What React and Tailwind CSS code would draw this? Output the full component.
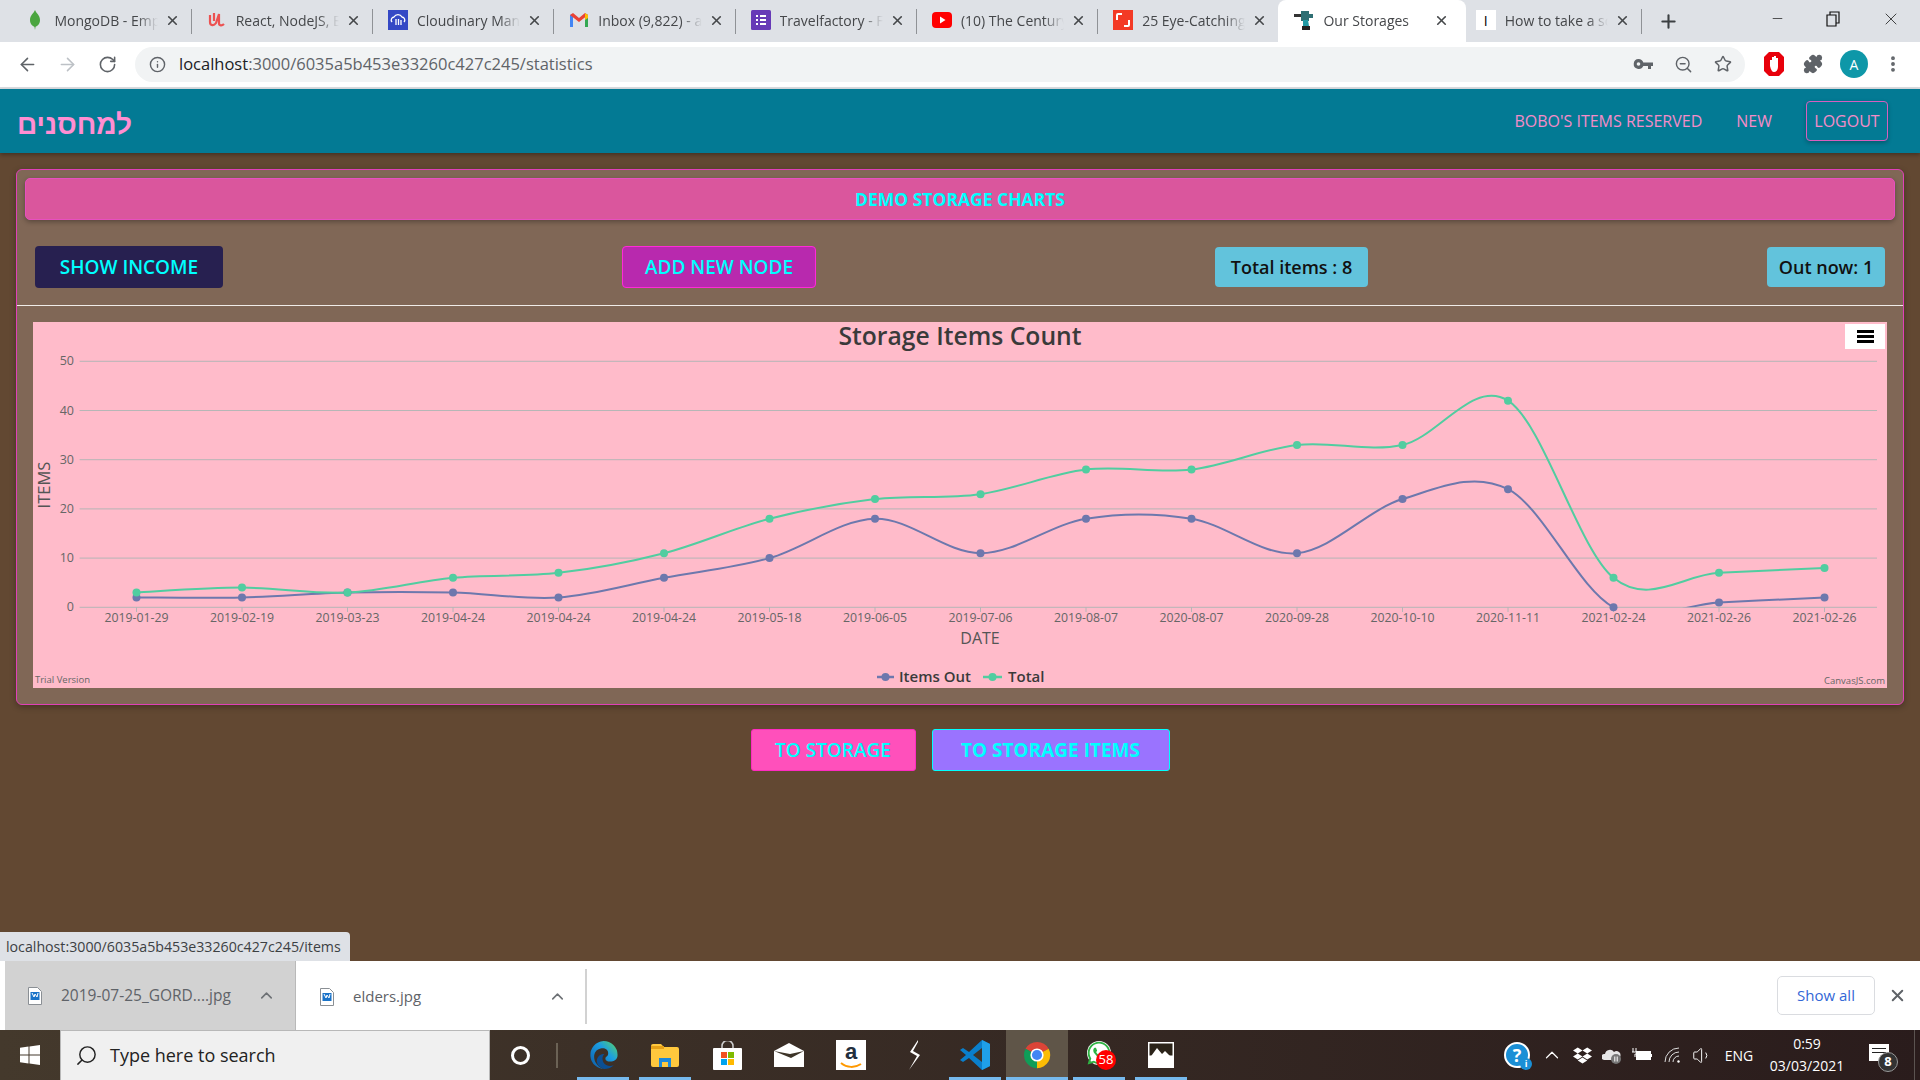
import React from "react";
import { ArrowLeft, ArrowRight, RotateCw, Info, ZoomOut, Star, Puzzle, EllipsisVertical, Search, Minus, X, Plus, ChevronUp, Volume1 } from "lucide-react";
import { FaDropbox, FaWhatsapp } from "react-icons/fa";

// Chart data
const labels = ["2019-01-29","2019-02-19","2019-03-23","2019-04-24","2019-04-24","2019-04-24","2019-05-18","2019-06-05","2019-07-06","2019-08-07","2020-08-07","2020-09-28","2020-10-10","2020-11-11","2021-02-24","2021-02-26","2021-02-26"];
const itemsOut = [2,2,3,3,2,6,10,18,11,18,18,11,22,24,0,1,2];
const itemsTotal = [3,4,3,6,7,11,18,22,23,28,28,33,33,42,6,7,8];

const xAt = (i) => 103.5 + i * 105.5;
const yAt = (v) => 285.3 - v * 4.92;

const splinePath = (values) => {
  const pts = values.map((v, i) => [xAt(i), yAt(v)]);
  let d = `M${pts[0][0]} ${pts[0][1]}`;
  for (let i = 0; i < pts.length - 1; i++) {
    const p0 = pts[i - 1] || pts[i];
    const p1 = pts[i];
    const p2 = pts[i + 1];
    const p3 = pts[i + 2] || p2;
    const c1x = p1[0] + (p2[0] - p0[0]) / 6;
    const c1y = p1[1] + (p2[1] - p0[1]) / 6;
    const c2x = p2[0] - (p3[0] - p1[0]) / 6;
    const c2y = p2[1] - (p3[1] - p1[1]) / 6;
    d += ` C${c1x} ${c1y} ${c2x} ${c2y} ${p2[0]} ${p2[1]}`;
  }
  return d;
};

const Fav = ({ children }) => (
  <svg width="20" height="20" viewBox="0 0 20 20" className="relative shrink-0">{children}</svg>
);

const tabs = [
  { title: "MongoDB - Empowering", icon: <Fav><path d="M10 0c1 3 5 5 5 10s-3.500 6-4.500 7l-.5 3-.5-3C8.500 16 5 15 5 10s4-7 5-10z" fill="#4aa53f" /></Fav> },
  { title: "React, NodeJS, Express", icon: <Fav><path d="M3 5v7c0 4 4 4 6 1l3-9v9c0 3 3 3 5 1M7 3v8" fill="none" stroke="#ec5252" strokeWidth="2.200" /></Fav> },
  { title: "Cloudinary Management", icon: <Fav><rect width="20" height="20" fill="#3448c5" /><path d="M4 12a3 3 0 0 1 2-5 4.500 4.500 0 0 1 8 0 3 3 0 0 1 2 5" fill="none" stroke="#fff" strokeWidth="1.300" /><path d="M8 9v6M10.500 9v6M13 10v5" stroke="#fff" strokeWidth="1.300" /></Fav> },
  { title: "Inbox (9,822) - avi", icon: <Fav><path d="M1 17V5l3-1v13z" fill="#4285f4" /><path d="M19 17V5l-3-1v13z" fill="#34a853" /><path d="M1 5l3-2 6 5 6-5 3 2-9 7z" fill="#ea4335" /><path d="M16 3l3 2v3l-3 2z" fill="#fbbc04" /></Fav> },
  { title: "Travelfactory - Forms", icon: <Fav><rect width="20" height="20" rx="1.500" fill="#673ab7" /><path d="M5 5h2v2H5zM5 9h2v2H5zM5 13h2v2H5zM9 5h6v2H9zM9 9h6v2H9zM9 13h6v2H9z" fill="#fff" /></Fav> },
  { title: "(10) The Century of", icon: <Fav><rect y="2" width="20" height="16" rx="4" fill="#ff0000" /><path d="M8 6.500l5.500 3.500L8 13.500z" fill="#fff" /></Fav> },
  { title: "25 Eye-Catching Charts", noSep: true, icon: <Fav><rect width="20" height="20" fill="#f33a25" /><path d="M4 10V5a1 1 0 0 1 1-1h4M16 10v5a1 1 0 0 1-1 1h-4" fill="none" stroke="#fff" strokeWidth="2" /></Fav> },
  { title: "Our Storages", active: true, noSep: true, icon: <Fav><path d="M0 4h8v3H0z" fill="#333" /><path d="M7 1h8v3h4v4h-4v3H7z" fill="#2f6f73" /><path d="M9 10h5l1 6H9z" fill="#1f9aa5" /><path d="M8 16h8v4H8z" fill="#222" /></Fav> },
  { title: "How to take a screen", icon: <span className="w-5 h-5 shrink-0 bg-white flex items-center justify-center text-[14px] text-black">I</span> },
];

const Tab = ({ tab }) => (
  <div className="relative flex items-center shrink-0 w-[181.300px] h-[42px] pl-[15px] pr-[12px] pb-[2px]">
    {tab.active && <div className="absolute inset-y-0 -left-[1px] -right-[5px] bg-white rounded-t-[8px]" />}
    {tab.icon}
    <span className="relative ml-[9px] flex-1 overflow-hidden whitespace-nowrap text-[14px] text-[#45474a] [mask-image:linear-gradient(to_right,black_80%,transparent)]">{tab.title}</span>
    <X size={15} strokeWidth={2.600} className="relative ml-[7px] shrink-0 text-[#45474a]" />
    {!tab.noSep && <div className="absolute right-0 top-[9px] h-[25px] w-px bg-[#8f9296]" />}
  </div>
);

const TabStrip = () => (
  <div className="flex items-center h-[42px] shrink-0 bg-[#dee1e6] pl-[10.400px]">
    {tabs.map((tab) => <Tab key={tab.title} tab={tab} />)}
    <Plus size={21} strokeWidth={2.400} className="ml-[16px] text-[#3c4043]" />
    <div className="ml-auto flex items-center -mt-[5px] text-[#222]">
      <Minus size={15} strokeWidth={1.200} className="mr-[41px]" />
      <svg width="14" height="16" viewBox="0 0 14 16" className="mr-[41px]" fill="none" stroke="#111" strokeWidth="1.200"><path d="M1 4h9v11H1zM4 4V1h9v11h-3" /></svg>
      <X size={20} strokeWidth={1} className="mr-[19px]" />
    </div>
  </div>
);

const Toolbar = () => (
  <div className="flex items-center h-[47px] shrink-0 bg-white border-b-2 border-[#dadce0] pb-[1px]">
    <ArrowLeft size={21} strokeWidth={1.800} className="ml-[17px] text-[#5f6368]" />
    <ArrowRight size={21} strokeWidth={1.800} className="ml-[19px] text-[#bdc1c6]" />
    <RotateCw size={19} strokeWidth={2} className="ml-[20px] text-[#5f6368]" />
    <div className="flex items-center ml-[18px] w-[1610px] h-[35px] rounded-full bg-[#f1f3f4] pl-[14px] pr-[13px]">
      <Info size={17} strokeWidth={2} className="text-[#5f6368]" />
      <span className="ml-[13px] text-[16.500px] text-[#202124]">localhost<span className="text-[#5f6368]">:3000/6035a5b453e33260c427c245/statistics</span></span>
      <svg width="20" height="12" viewBox="0 0 20 12" className="ml-auto"><path d="M5.500 1a5 5 0 0 1 4.800 3.500H20V8h-2v3h-3V8h-4.700A5 5 0 1 1 5.500 1z" fill="#5f6368" /><circle cx="5.500" cy="6" r="1.800" fill="#f1f3f4" /></svg>
      <ZoomOut size={19} strokeWidth={1.800} className="ml-[21px] text-[#5f6368]" />
      <Star size={18} strokeWidth={2} className="ml-[21px] text-[#5f6368]" />
    </div>
    <svg width="22" height="26" viewBox="0 0 22 26" className="ml-[18px]"><path d="M6 1h10l5 5v14l-5 5H6l-5-5V6z" fill="#e8000b" /><path d="M7 15V9l2 0v4-7h2v6-7h2v7-5h2v9c0 3-2 5-4 5s-3-2-4-6z" fill="#fff" /></svg>
    <Puzzle size={20} fill="#5f6368" className="ml-[18px] text-[#5f6368]" />
    <div className="ml-[17px] flex items-center justify-center w-[28px] h-[28px] rounded-full bg-[#0e97a8] text-white text-[14px]">A</div>
    <EllipsisVertical size={20} strokeWidth={2.600} className="ml-[15px] text-[#5f6368]" />
  </div>
);

const Navbar = () => (
  <nav className="relative z-10 flex items-center h-[64px] shrink-0 bg-[#037a94] pl-[17px] pr-[32px] shadow-[0_2px_4px_rgba(0,0,0,0.3)]">
    <span className="mt-[7px] text-[28px] font-bold text-[#ff8ed2] font-['Liberation_Sans',sans-serif]" dir="rtl">למחסנים</span>
    <div className="ml-auto flex items-center text-[16px] text-[#f48cc8]">
      <a>BOBO'S ITEMS RESERVED</a>
      <a className="ml-[34px]">NEW</a>
      <a className="ml-[34px] flex items-center justify-center w-[82px] h-[40px] border border-[#d75fc0] rounded-[4px] shadow-[0_2px_4px_rgba(0,0,0,0.25)]">LOGOUT</a>
    </div>
  </nav>
);

const Chart = () => (
  <div className="relative mx-[16px] h-[366px] bg-[#ffbbca]">
    <svg width="1854" height="366" viewBox="0 0 1854 366" className="block" fontFamily="'Open Sans', sans-serif">
      <defs>
        <clipPath id="plot"><rect x="46" y="30" width="1798" height="255.300" /></clipPath>
      </defs>
      <text x="927" y="23" textAnchor="middle" fontSize="24.700" fontWeight="600" fill="#3a3a3a">Storage Items Count</text>
      {[0, 10, 20, 30, 40, 50].map((v) => (
        <g key={v}>
          <line x1="46.600" x2="1844" y1={yAt(v)} y2={yAt(v)} stroke="#b6b6b6" strokeWidth="1" />
          <text x="41" y={yAt(v) + 4} textAnchor="end" fontSize="12.500" fill="#666">{v}</text>
        </g>
      ))}
      {labels.map((l, i) => (
        <g key={i}>
          <line x1={xAt(i)} x2={xAt(i)} y1="285" y2="290" stroke="#b6b6b6" />
          <text x={xAt(i)} y="300" textAnchor="middle" fontSize="12.300" fill="#666">{l}</text>
        </g>
      ))}
      <text x="0" y="0" transform="translate(17 163) rotate(-90)" textAnchor="middle" fontSize="16.500" fill="#555">ITEMS</text>
      <text x="947" y="322" textAnchor="middle" fontSize="16" fill="#555">DATE</text>
      <g clipPath="url(#plot)">
        <path d={splinePath(itemsOut)} fill="none" stroke="#6d78ad" strokeWidth="2" />
        <path d={splinePath(itemsTotal)} fill="none" stroke="#51cda0" strokeWidth="2" />
      </g>
      {itemsOut.map((v, i) => <circle key={i} cx={xAt(i)} cy={yAt(v)} r="4" fill="#6d78ad" />)}
      {itemsTotal.map((v, i) => <circle key={i} cx={xAt(i)} cy={yAt(v)} r="4" fill="#51cda0" />)}
      <line x1="844" x2="861" y1="355" y2="355" stroke="#6d78ad" strokeWidth="2.500" />
      <circle cx="852.500" cy="355" r="4" fill="#6d78ad" />
      <text x="866" y="360" fontSize="15" fontWeight="600" fill="#3a3a3a">Items Out</text>
      <line x1="950" x2="969" y1="355" y2="355" stroke="#51cda0" strokeWidth="2.500" />
      <circle cx="959.500" cy="355" r="4" fill="#51cda0" />
      <text x="975" y="360" fontSize="15" fontWeight="600" fill="#3a3a3a">Total</text>
      <text x="2" y="361" fontSize="9.500" fill="#666">Trial Version</text>
      <text x="1852" y="362" textAnchor="end" fontSize="9.500" fill="#666">CanvasJS.com</text>
    </svg>
    <div className="absolute right-[2px] top-[2px] flex flex-col justify-center gap-[2px] items-center w-[40px] h-[25px] bg-white">
      <div className="w-[17px] h-[3px] bg-black" />
      <div className="w-[17px] h-[3px] bg-black" />
      <div className="w-[17px] h-[3px] bg-black" />
    </div>
  </div>
);

const Card = () => (
  <div className="border border-[#e040b8] rounded-[6px] bg-[#806756] pt-[8px] pb-[16px] shadow-[0_2px_6px_rgba(0,0,0,0.3)]">
    <div className="mx-[8px] flex items-center justify-center h-[42px] pt-[1px] rounded-[5px] border border-[#e84fc0] bg-[#da569d] text-[17.500px] font-bold text-[#00ffff] shadow-[0_2px_5px_rgba(0,0,0,0.3)]">
      DEMO STORAGE CHARTS
    </div>
    <div className="flex items-center justify-between h-[86px] px-[18px] pt-[9px] border-b border-[#f0ece8]">
      <button className="w-[188px] h-[42px] rounded-[4px] bg-[#272050] text-[19px] font-semibold text-[#00ffff]">SHOW INCOME</button>
      <button className="w-[194px] h-[42px] rounded-[4px] border border-[#ff2ad8] bg-[#b829ae] text-[19px] font-semibold text-[#00ffff]">ADD NEW NODE</button>
      <div className="flex items-center justify-center w-[153px] h-[40px] rounded-[4px] bg-[#62c3dc] text-[18px] font-semibold text-[#111]">Total items : 8</div>
      <div className="flex items-center justify-center w-[118px] h-[40px] rounded-[4px] bg-[#62c3dc] text-[18px] font-semibold text-[#111]">Out now: 1</div>
    </div>
    <div className="mt-[16px]"><Chart /></div>
  </div>
);

const FileIcon = () => (
  <svg width="14" height="18" viewBox="0 0 14 18" className="shrink-0"><path d="M.5.5h9l4 4v13H.5z" fill="#fff" stroke="#8a8f94" /><rect x="2.500" y="5" width="9" height="8" fill="#1a73c8" /><path d="M4 6l2 4 1-3 2 3 1-4" stroke="#fff" fill="none" /></svg>
);

const DownloadBar = () => (
  <div className="flex items-stretch h-[69px] shrink-0 bg-white pl-[5px]">
    <div className="flex items-center w-[291px] bg-[#d2d2d2] pl-[23px] border-r border-[#b9b9b9]">
      <FileIcon />
      <span className="ml-[19px] text-[15.500px] text-[#5f6368]">2019-07-25_GORD....jpg</span>
      <ChevronUp size={19} className="ml-auto mr-[19px] text-[#6d7175]" />
    </div>
    <div className="flex items-center w-[291px] pl-[24px] my-[8px] mb-[6px] border-r-2 border-[#d2d2d2]">
      <FileIcon />
      <span className="ml-[19px] text-[15px] text-[#5f6368]">elders.jpg</span>
      <ChevronUp size={19} className="ml-auto mr-[18px] text-[#6d7175]" />
    </div>
    <button className="ml-auto self-center w-[98px] h-[39px] rounded-[5px] border border-[#dadce0] text-[15px] text-[#3367d6]">Show all</button>
    <X size={19} strokeWidth={2.500} className="self-center ml-[13px] mr-[13px] text-[#5f6368]" />
  </div>
);

const Chrome = () => (
  <svg width="28" height="28" viewBox="0 0 36 36"><path d="M18 18 3.300 10A17 17 0 0 1 33 10z" fill="#db4437" /><path d="M18 18 33 10A17 17 0 0 1 18 35z" fill="#fbbc05" /><path d="M18 18 18 35A17 17 0 0 1 3.300 10z" fill="#0f9d58" /><circle cx="18" cy="18" r="8.500" fill="#fff" /><circle cx="18" cy="18" r="6.500" fill="#4285f4" /></svg>
);

const apps = [
  { key: "edge", bar: true, icon: <svg width="31" height="30" viewBox="0 0 32 32"><defs><linearGradient id="edge" x1="0" y1="1" x2="1" y2="0"><stop offset="0" stopColor="#0c59a4" /><stop offset="0.6" stopColor="#1b9de2" /><stop offset="1" stopColor="#5dd85f" /></linearGradient></defs><path d="M16 1a15 15 0 0 1 15 15c0 5-4 7-8 7-3 0-5-1-5-3 0-3 3-2 3-6 0-4-4-6-8-5C8 10 6 14 6 18c0 6 5 12 12 13A15 15 0 0 1 16 1z" fill="url(#edge)" /><path d="M9 24c-1-6 4-10 8-9-2 2-3 5-1 9 2 3 6 5 11 3-3 3-7 4-10 4-3-1-7-3-8-7z" fill="#0b4f94" /></svg> },
  { key: "files", bar: true, icon: <svg width="28" height="23" viewBox="0 0 28 23"><path d="M0 2a2 2 0 0 1 2-2h8l3 3h13a2 2 0 0 1 2 2v16a2 2 0 0 1-2 2H2a2 2 0 0 1-2-2z" fill="#ffc83d" /><path d="M0 2h13v3H0z" fill="#e6a118" /><path d="M8 23v-9h12v9h-3v-5h-6v5z" fill="#1e88d8" /></svg> },
  { key: "store", icon: <svg width="29" height="29" viewBox="0 0 29 29"><path d="M9 7V5a5.500 5.500 0 0 1 11 0v2" fill="none" stroke="#cfcfcf" strokeWidth="1.500" /><rect y="7" width="29" height="22" rx="1" fill="#fff" /><rect x="8" y="11" width="6" height="6" fill="#f25022" /><rect x="15" y="11" width="6" height="6" fill="#7fba00" /><rect x="8" y="18" width="6" height="6" fill="#00a4ef" /><rect x="15" y="18" width="6" height="6" fill="#ffb900" /></svg> },
  { key: "mail", icon: <svg width="30" height="24" viewBox="0 0 30 24"><path d="M0 8 15 0l15 8v16H0z" fill="#fff" /><path d="M0 8l17 7 13-7-14 3z" fill="#3d3428" /></svg> },
  { key: "amazon", icon: <div className="relative flex justify-center w-[30px] h-[30px] bg-white"><span className="text-[22px] leading-[24px] font-bold text-[#232f3e] font-['Liberation_Sans',sans-serif]">a</span><svg width="22" height="7" viewBox="0 0 22 7" className="absolute bottom-[1px]"><path d="M1 1c6 5 14 5 20 1" fill="none" stroke="#f90" strokeWidth="2" /></svg></div> },
  { key: "sword", icon: <svg width="13" height="30" viewBox="0 0 13 30"><path d="M11 0 3 12l7 4-8 14 11-15-7-4 5-9z" fill="#fff" /></svg> },
  { key: "code", bar: true, icon: <svg width="30" height="30" viewBox="0 0 30 30"><path d="M22 0 30 4v22l-8 4L9 18l-6 4-3-2 6-5-6-5 3-2 6 4z" fill="#0a7fcb" /><path d="M22 8 13 15l9 7z" fill="#3d3428" /><path d="M22 0l8 4v22l-8 4z" fill="#1fa0e8" /></svg> },
  { key: "chrome", bar: true, active: true, icon: <Chrome /> },
  { key: "whatsapp", bar: true, icon: <div className="relative w-[26px] h-[30px]"><div className="absolute left-[1px] top-[1px] w-[24px] h-[24px] rounded-full bg-white" /><FaWhatsapp size={26} className="absolute left-0 top-0 text-[#2fb344]" /><div className="absolute left-[10px] top-[10px] flex items-center justify-center w-[20px] h-[20px] rounded-full bg-[#f00] text-[13px] text-white">58</div></div> },
  { key: "photos", bar: true, icon: <svg width="26" height="26" viewBox="0 0 26 26"><rect width="26" height="26" fill="#fff" /><rect x="1.500" y="1.500" width="23" height="12" fill="#2b2319" /><path d="M1 17 9 6l5 6 3-3 8 8v9H1z" fill="#fff" /></svg> },
];

const TaskbarApp = ({ app }) => (
  <div className={`relative flex items-center justify-center w-[62px] h-[50px] ${app.active ? "bg-[#5f5548]" : ""}`}>
    {app.icon}
    {app.bar && <div className={`absolute bottom-0 h-[3px] bg-[#76b9ed] ${app.active ? "inset-x-0" : "left-[5px] right-[5px]"}`} />}
  </div>
);

const Tray = () => (
  <div className="flex items-center h-full w-[423px] text-white">
    <div className="flex items-center justify-center w-[40px]">
      <div className="relative flex items-center justify-center w-[26px] h-[26px] rounded-full bg-[#1a8fd6] border-2 border-white text-[18px] font-bold">?
        <div className="absolute -right-[4px] -bottom-[4px] flex items-center justify-center w-[12px] h-[12px] rounded-full bg-[#1a8fd6] text-[9px]">i</div>
      </div>
    </div>
    <div className="flex justify-center w-[30px]"><ChevronUp size={22} strokeWidth={1.300} /></div>
    <div className="flex justify-center w-[30px]"><FaDropbox size={19} /></div>
    <div className="flex justify-center w-[30px]">
      <svg width="20" height="17" viewBox="0 0 20 17"><path d="M2 13a3 3 0 0 1 1-6 5 5 0 0 1 9-2 4 4 0 0 1 6 5v3z" fill="#e6e6e6" /><circle cx="14" cy="12" r="5" fill="#777" /><path d="M12.800 9.500v5M15.200 9.500v5" stroke="#fff" /></svg>
    </div>
    <div className="flex justify-center w-[30px]">
      <svg width="20" height="14" viewBox="0 0 20 14"><path d="M1 0v4M4 0v4M0 4h5v2H3v3" stroke="#fff" fill="none" /><rect x="4.500" y="3.500" width="14" height="8" fill="#fff" stroke="#fff" /><rect x="19" y="6" width="1" height="3" fill="#fff" /></svg>
    </div>
    <div className="flex justify-center w-[30px]">
      <svg width="16" height="16" viewBox="0 0 16 16" fill="none" stroke="#ddd" strokeWidth="1"><path d="M1 15A14 14 0 0 1 15 1M5 15A10 10 0 0 1 15 5M9 15a6 6 0 0 1 6-6" /><circle cx="14.500" cy="14.500" r="1.200" fill="#fff" stroke="none" /></svg>
    </div>
    <div className="flex justify-center w-[30px]"><Volume1 size={21} strokeWidth={1.100} /></div>
    <div className="w-[44px] text-center text-[14px]">ENG</div>
    <div className="w-[92px] text-center text-[14px] leading-[22px]"><div>0:59</div><div>03/03/2021</div></div>
    <div className="flex justify-center w-[52px]">
      <div className="relative w-[20px] h-[17px] bg-white -mt-[6px]">
        <div className="mx-[3px] mt-[4px] h-px bg-[#222]" />
        <div className="mx-[3px] mt-[3px] h-px bg-[#222]" />
        <div className="absolute -right-[9px] top-[8px] flex items-center justify-center w-[20px] h-[20px] rounded-full border border-[#999] bg-[#333] text-[13px] font-bold">8</div>
      </div>
    </div>
    <div className="ml-[9px] w-px h-full bg-[#5b5350]" />
  </div>
);

const Taskbar = () => (
  <div className="flex items-center h-[50px] shrink-0 bg-linear-to-r from-[#44392c] to-[#2a1c1c]">
    <div className="flex items-center justify-center w-[60px]">
      <svg width="20" height="20" viewBox="0 0 20 20"><path d="M0 2.800 8.500 1.600V9.500H0zM9.500 1.500 20 0v9.500H9.500zM0 10.500h8.500v7.900L0 17.200zM9.500 10.500H20V20L9.500 18.500z" fill="#fff" /></svg>
    </div>
    <div className="flex items-center w-[430px] h-full bg-[#f0f0f0] border-x border-t border-[#b8b8b8] pl-[14px]">
      <Search size={23} strokeWidth={1.500} className="text-[#222] -scale-x-100" />
      <span className="ml-[12px] text-[18px] text-[#222]">Type here to search</span>
    </div>
    <div className="flex items-center justify-center w-[60px]">
      <div className="w-[19px] h-[19px] rounded-full border-[3px] border-white" />
    </div>
    <div className="w-[22px] pl-[6px]"><div className="w-[2px] h-[25px] bg-[#6b6255]" /></div>
    {apps.map((app) => <TaskbarApp key={app.key} app={app} />)}
    <div className="flex-1" />
    <Tray />
  </div>
);

export default function App() {
  return (
    <div className="flex flex-col w-[1920px] h-screen overflow-hidden font-['Open_Sans',sans-serif]">
      <TabStrip />
      <Toolbar />
      <Navbar />
      <main className="relative flex-1 bg-[#624832] px-[16px] pt-[16px]">
        <Card />
        <div className="flex justify-center gap-[16px] mt-[24px]">
          <button className="w-[165px] h-[42px] rounded-[3px] border border-[#ff2ac0] bg-[#ff50bb] text-[19px] font-semibold text-[#00ffff]">TO STORAGE</button>
          <button className="w-[238px] h-[42px] rounded-[3px] border border-[#00ffff] bg-[#9a73ff] text-[19px] font-bold text-[#00ffff]">TO STORAGE ITEMS</button>
        </div>
        <div className="absolute left-0 bottom-0 flex items-center h-[29px] w-[350px] pl-[6px] rounded-tr-[4px] bg-[#dee1e6] text-[14.200px] text-[#3c4043]">
          localhost:3000/6035a5b453e33260c427c245/items
        </div>
      </main>
      <DownloadBar />
      <Taskbar />
    </div>
  );
}
